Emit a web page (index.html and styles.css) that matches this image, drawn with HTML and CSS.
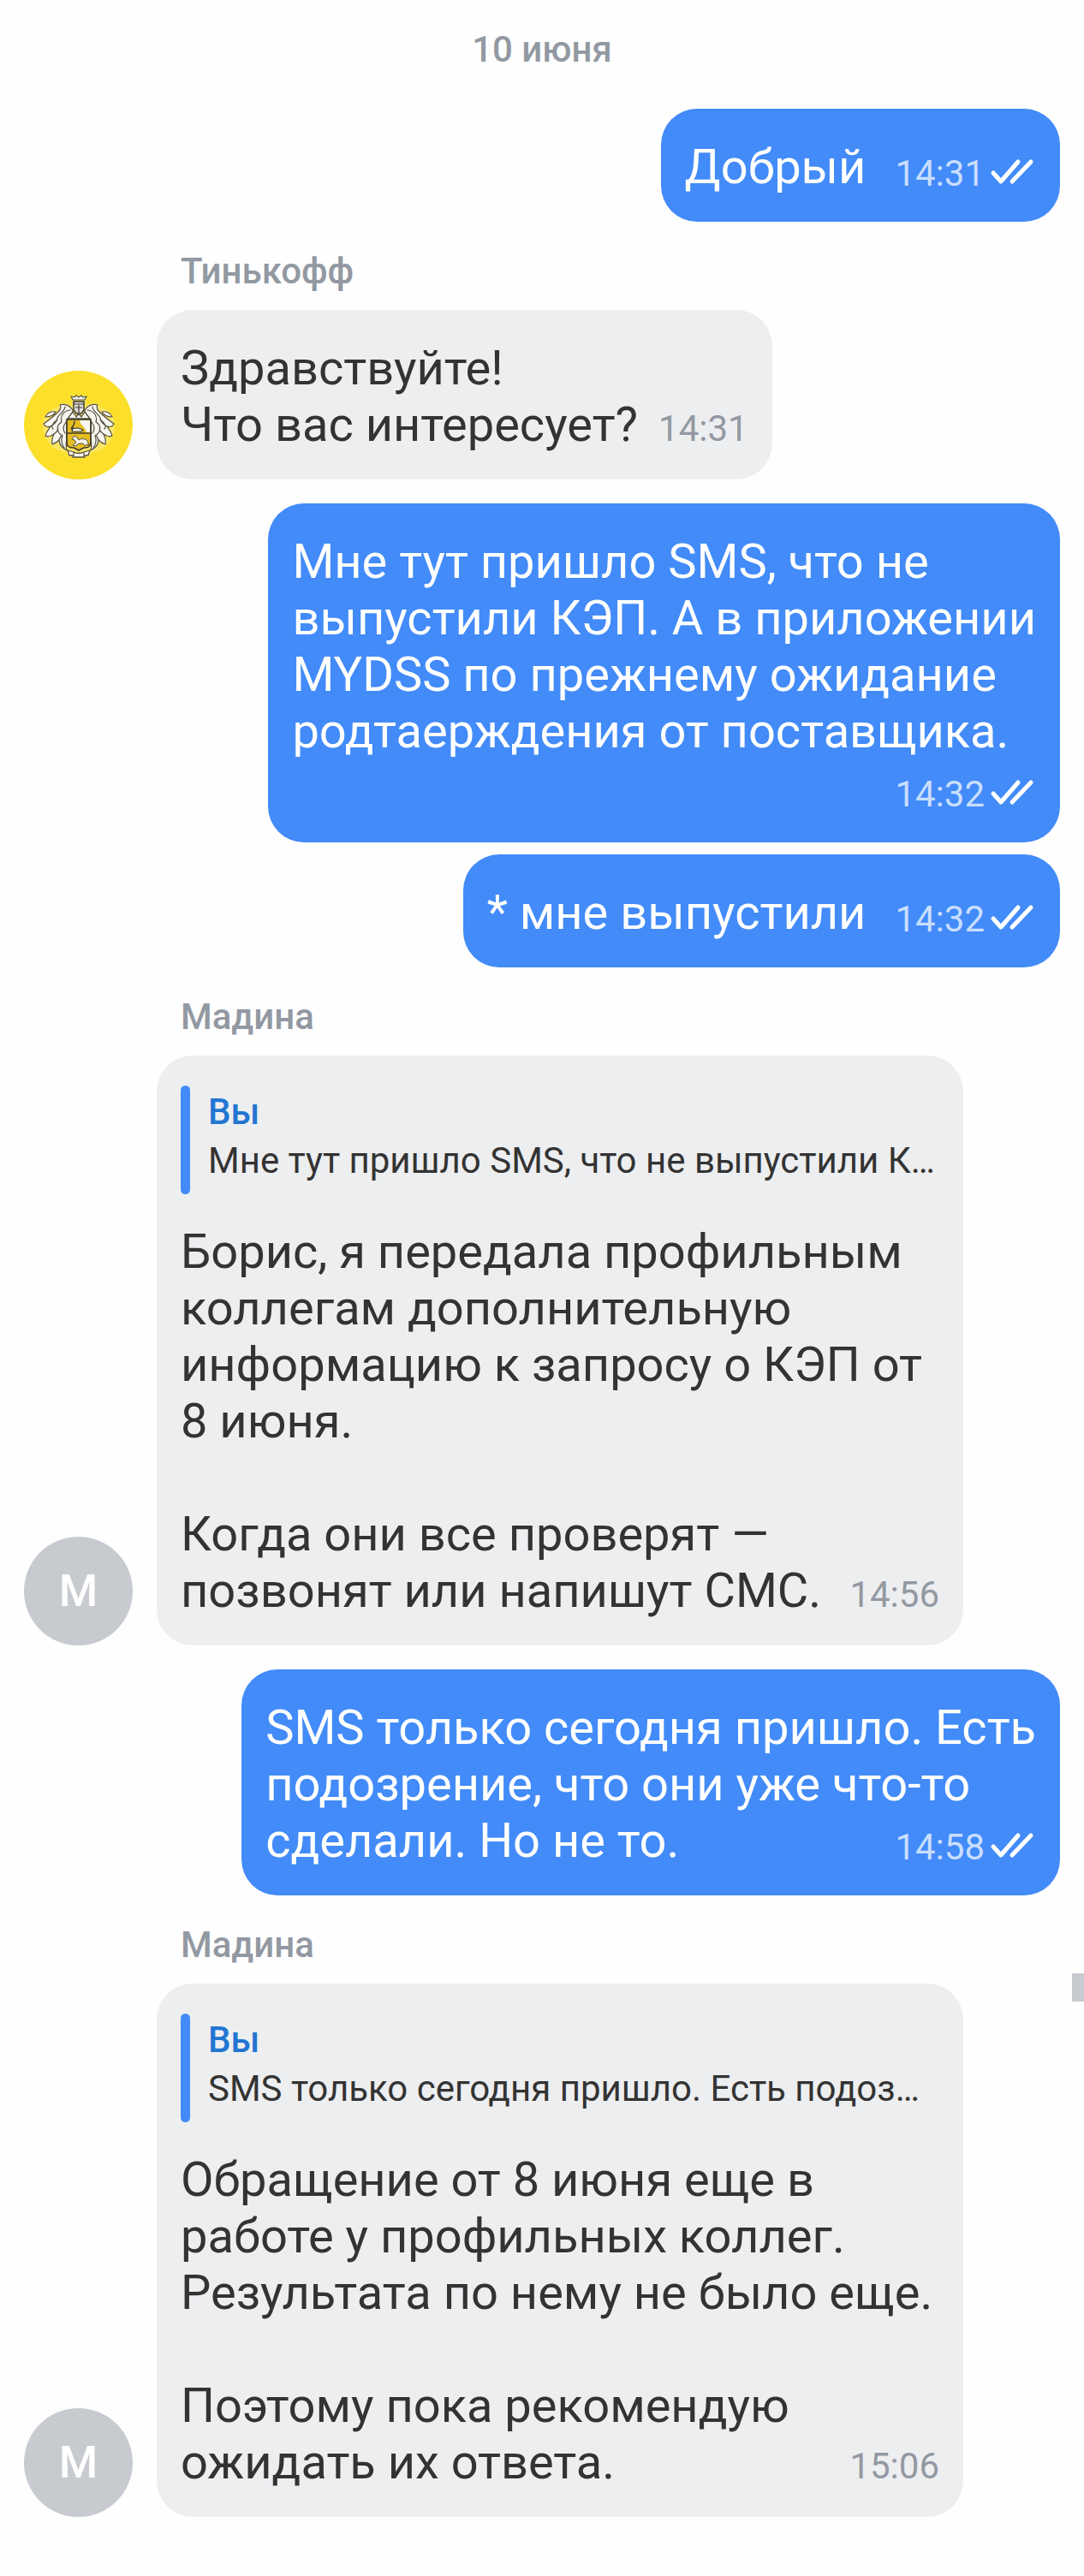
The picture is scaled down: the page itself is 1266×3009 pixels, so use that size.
FILE: index.html
```
<!DOCTYPE html>
<html lang="ru">
<head>
  <meta charset="UTF-8">
  <meta name="viewport" content="width=device-width, initial-scale=1.0">
  <title>Чат поддержки</title>
  <link rel="stylesheet" href="styles.css">
</head>
<body>
  <!-- Shared icons -->
  <svg class="sprite" aria-hidden="true">
    <symbol id="ticks" viewBox="0 0 60 36">
      <path d="M10 19 L19 29 L39 6 M32 29 L54 6" fill="none" stroke="currentColor" stroke-width="5" stroke-linecap="round" stroke-linejoin="round"/>
    </symbol>
  </svg>

  <main class="chat">
    <h1 class="date">10 июня</h1>

    <div class="row row-out">
      <div class="bubble">
        <p class="text">Добрый<span class="time">14:31<svg class="ticks"><use href="#ticks"/></svg></span></p>
      </div>
    </div>

    <p class="author">Тинькофф</p>
    <div class="row row-in">
      <div class="avatar avatar-bank">
        <svg class="emblem" viewBox="0 0 94 86" aria-hidden="true">
          <!-- pale outline under the whole emblem -->
          <path d="M38 8 H56 L55 20 C62 15 70 17 72 22 C82 24 86 30 88 36 C90 46 88 54 84 60 C80 68 74 72 62 74 L59 80 H35 L32 74 C20 72 14 68 10 60 C6 54 4 46 6 36 C8 30 12 24 22 22 C24 17 32 15 39 20 Z" fill="#fbf0a0" opacity="0.5"/>
          <!-- leaves, left half mirrored to the right -->
          <g id="leaf" fill="#f6f5f0" stroke="#55513f" stroke-width="1.2" stroke-linejoin="round" stroke-linecap="round">
            <path d="M40 25 C37 20 31 17 25 19 C27 22 26 24 23 27 C19 31 13 36 6 41 C8 45 11 45 14 44 C12 48 9 50 8 55 C11 57 15 55 18 53 C16 57 15 60 16 65 C19 64 22 62 24 60 C24 65 27 69 33 72 C31 66 33 62 33 57 V37 C36 33 40 30 40 25 Z"/>
            <path d="M8 33 C10 28 15 26 20 27 C18 31 13 33 8 33 Z"/>
            <path d="M37 25 C29 26 25 32 27 39 C20 43 21 51 28 55 C26 60 27 65 30 69 M31 21 C31 27 22 30 21 37 C15 41 15 45 17 47 M14 44 C18 42 20 40 22 36 M18 53 C21 51 22 50 23 47 M24 60 C25 57 26 56 27 54 M32 39 C29 43 28 48 31 52" fill="none"/>
          </g>
          <use href="#leaf" transform="matrix(-1 0 0 1 94 0)"/>
          <!-- crown and helmet -->
          <path d="M40 13 L38 9 L42 10 L44 8 L47 10 L50 8 L52 10 L56 9 L54 13 Z" fill="#f6f5f0" stroke="#55513f" stroke-width="1.2" stroke-linejoin="round"/>
          <path d="M41 15 H53 V25 L50 29 H44 L41 25 Z" fill="#dddcd6" stroke="#3c392f" stroke-width="1.5"/>
          <path d="M41 18 H53 M47 19 V28 M43 22 H51" fill="none" stroke="#3c392f" stroke-width="1.2"/>
          <path d="M40 27 L34 35 H60 L54 27 L50 33 L47 29 L44 33 Z" fill="#f6f5f0" stroke="#55513f" stroke-width="1.3" stroke-linejoin="round"/>
          <!-- shield -->
          <path d="M33 36 H61 V63 C61 68 58 69 53 69 L47 72 L41 69 C36 69 33 68 33 63 Z" fill="#e5bd22" stroke="#3c392f" stroke-width="1.7"/>
          <path d="M48 37 H60 V51 H56 C55 45 49 43 48 37 Z" fill="#f6f5f0"/>
          <path d="M33 52 H61" stroke="#3c392f" stroke-width="1.4"/>
          <path d="M42 38 C43 42 39 44 38 47 L46 46 L52 48 L50 50 H39 Z" fill="#f6f5f0" stroke="#3c392f" stroke-width="1.1" stroke-linejoin="round"/>
          <path d="M39 59 L42 55 L45 57 L47 60 C50 58 55 58 57 61 L59 66 L56 65 L54 67 L52 64 H47 L43 67 L40 66 L44 63 L42 60 Z" fill="#f6f5f0" stroke="#55513f" stroke-width="1" stroke-linejoin="round"/>
          <!-- ribbon -->
          <path d="M34 72 L41 74 C45 76 49 76 53 74 L60 72 L58 78 L54 78 V80 H40 V78 L36 78 Z" fill="#f6f5f0" stroke="#55513f" stroke-width="1.3" stroke-linejoin="round"/>
          <path d="M41 74 V79 M53 74 V79" stroke="#55513f" stroke-width="1.2"/>
        </svg>
      </div>
      <div class="bubble">
        <p class="text">Здравствуйте!<br>Что вас интересует?<span class="time">14:31</span></p>
      </div>
    </div>

    <div class="row row-out">
      <div class="bubble">
        <p class="text">Мне тут пришло SMS, что не<br>выпустили КЭП. А в приложении<br>MYDSS по прежнему ожидание<br>родтаерждения от поставщика.<span class="time time-below">14:32<svg class="ticks"><use href="#ticks"/></svg></span></p>
      </div>
    </div>

    <div class="row row-out row-next">
      <div class="bubble">
        <p class="text">* мне выпустили<span class="time">14:32<svg class="ticks"><use href="#ticks"/></svg></span></p>
      </div>
    </div>

    <p class="author">Мадина</p>
    <div class="row row-in">
      <div class="avatar">М</div>
      <div class="bubble bubble-reply">
        <blockquote class="quote">
          <p class="quote-author">Вы</p>
          <p class="quote-text">Мне тут пришло SMS, что не выпустили К…</p>
        </blockquote>
        <p class="text">Борис, я передала профильным<br>коллегам дополнительную<br>информацию к запросу о КЭП от<br>8 июня.<br><br>Когда они все проверят —<br>позвонят или напишут СМС.<span class="time">14:56</span></p>
      </div>
    </div>

    <div class="row row-out">
      <div class="bubble">
        <p class="text">SMS только сегодня пришло. Есть<br>подозрение, что они уже что-то<br>сделали. Но не то.<span class="time">14:58<svg class="ticks"><use href="#ticks"/></svg></span></p>
      </div>
    </div>

    <p class="author">Мадина</p>
    <div class="row row-in">
      <div class="avatar">М</div>
      <div class="bubble bubble-reply">
        <blockquote class="quote">
          <p class="quote-author">Вы</p>
          <p class="quote-text">SMS только сегодня пришло. Есть подоз…</p>
        </blockquote>
        <p class="text">Обращение от 8 июня еще в<br>работе у профильных коллег.<br>Результата по нему не было еще.<br><br>Поэтому пока рекомендую<br>ожидать их ответа.<span class="time">15:06</span></p>
      </div>
    </div>

    <div class="scroll-thumb"></div>
  </main>
</body>
</html>
```
FILE: styles.css
```
* {
  box-sizing: border-box;
}

body {
  margin: 0;
  background-color: #fefefe;
  color: #333;
  font-family: Roboto, 'Liberation Sans', sans-serif;
  font-size: 56px;
  line-height: 66px;
}

p, h1, blockquote {
  margin: 0;
}

.sprite {
  display: none;
}

.chat {
  position: relative;
  padding: 33px 28px 69px;
}

.date, .author {
  color: #9299a2;
  font-size: 42px;
  font-weight: 500;
  line-height: 50px;
}

.date {
  margin-bottom: 44px;
  text-align: center;
}

.author {
  margin: 33px 0 20px 183px;
}

/* Message rows */
.row {
  display: flex;
  align-items: flex-end;
}

.row-out {
  justify-content: flex-end;
}

.row-in {
  gap: 28px;
  padding-right: 113px;
}

.row-in + .row-out {
  margin-top: 28px;
}

.row-next {
  margin-top: 14px;
}

.avatar {
  display: flex;
  flex: none;
  align-items: center;
  justify-content: center;
  width: 127px;
  height: 127px;
  border-radius: 50%;
  background-color: #c7cacf;
  color: #fff;
  font-size: 52px;
  font-weight: 500;
}

.avatar-bank {
  background-color: #fcdf2a;
}

.emblem {
  width: 94px;
  height: 86px;
}

.bubble {
  min-width: 0;
  padding: 35px 28px 31px;
  border-radius: 42px;
  background-color: #edeef0;
}

.bubble-reply {
  flex: 1;
}

.row-out .bubble {
  background-color: #428bf9;
  color: #fff;
}

.text {
  display: flow-root;
}

/* Time sits in the last line of the text */
.time {
  float: right;
  margin: 13px 0 0 24px;
  color: #9299a2;
  font-size: 42px;
  line-height: 50px;
}

.row-out .time {
  display: flex;
  margin: 16px 0 0 34px;
  color: #c9deff;
}

.row-out .time-below {
  float: none;
  justify-content: flex-end;
}

.ticks {
  width: 60px;
  height: 36px;
  margin-top: 5px;
  color: #fff;
}

/* Quoted message */
.quote {
  position: relative;
  margin-bottom: 34px;
  padding: 2px 0 11px 32px;
  font-size: 42px;
  line-height: 57px;
}

.quote::before {
  content: '';
  position: absolute;
  top: 0;
  bottom: 0;
  left: 0;
  width: 11px;
  border-radius: 6px;
  background-color: #428bf9;
}

.quote-author {
  color: #2276d2;
  font-weight: 500;
}

.quote-text {
  overflow: hidden;
  text-overflow: ellipsis;
  white-space: nowrap;
}

.scroll-thumb {
  position: absolute;
  top: 2305px;
  right: 0;
  width: 14px;
  height: 33px;
  background-color: #c7cacf;
}
```
